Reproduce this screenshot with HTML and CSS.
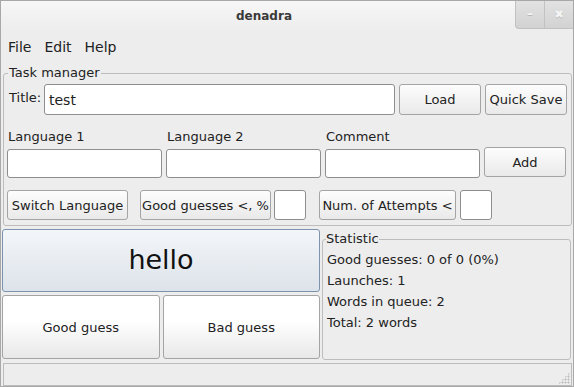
FILE: index.html
```html
<!DOCTYPE html>
<html lang="en">
<head>
    <meta charset="UTF-8">
    <title>denadra</title>
    <link rel="stylesheet" href="styles.css">
</head>
<body>
    <div class="window">
        <div class="titlebar">
            <span class="title">denadra</span>
            <div class="wm-buttons">
                <span class="wm-btn wm-min">&#8211;</span>
                <span class="wm-btn wm-close">&#10006;</span>
            </div>
        </div>

        <div class="menubar">
            <span>File</span>
            <span>Edit</span>
            <span>Help</span>
        </div>

        <fieldset class="frame task">
            <legend>Task manager</legend>
            <div class="title-row">
                <span class="lbl">Title:</span>
                <input class="entry title-entry" type="text" value="test">
                <button class="btn">Load</button>
                <button class="btn">Quick Save</button>
            </div>
            <div class="word-grid">
                <span class="lbl">Language 1</span>
                <span class="lbl">Language 2</span>
                <span class="lbl">Comment</span>
                <span></span>
                <input class="entry" type="text">
                <input class="entry" type="text">
                <input class="entry" type="text">
                <button class="btn">Add</button>
            </div>
            <div class="filter-row">
                <button class="btn switch">Switch Language</button>
                <button class="btn good-btn">Good guesses &lt;, %</button>
                <input class="entry small" type="text">
                <button class="btn attempts">Num. of Attempts &lt;</button>
                <input class="entry small" type="text">
            </div>
        </fieldset>

        <div class="quiz">
            <div class="cards">
                <button class="btn word">hello</button>
                <div class="answers">
                    <button class="btn answer">Good guess</button>
                    <button class="btn answer">Bad guess</button>
                </div>
            </div>
            <fieldset class="frame stats">
                <legend>Statistic</legend>
                <p>Good guesses: 0 of 0 (0%)</p>
                <p>Launches: 1</p>
                <p>Words in queue: 2</p>
                <p>Total: 2 words</p>
            </fieldset>
        </div>

        <div class="statusbar">
            <span class="grip"></span>
        </div>
    </div>
</body>
</html>
```

FILE: styles.css
```css
* {
    box-sizing: border-box;
}
body {
    margin: 0;
    font-family: "DejaVu Sans", sans-serif;
    font-size: 13px;
    color: #2e2e2e;
    background: #ededed;
}
.window {
    width: 574px;
    height: 387px;
    border: 1px solid #a8a8a8;
    background: #ededed;
    display: flex;
    flex-direction: column;
    overflow: hidden;
}
.titlebar {
    height: 29px;
    position: relative;
    display: flex;
    align-items: center;
    justify-content: center;
    background: linear-gradient(#f7f7f7, #ededed);
}
.title {
    font-weight: bold;
    font-size: 12px;
    color: #3a3a3a;
    margin-left: -46px;
}
.wm-buttons {
    position: absolute;
    top: -1px;
    right: 0;
    display: flex;
}
.wm-btn {
    width: 29px;
    height: 29px;
    display: flex;
    align-items: center;
    justify-content: center;
    color: #f4f4f4;
    font-size: 12px;
    background: linear-gradient(#e2e2e2, #d2d2d2);
    border-left: 1px solid #c2c2c2;
    border-bottom: 1px solid #c2c2c2;
    text-shadow: 0 1px 0 #b8b8b8;
}
.wm-min {
    border-bottom-left-radius: 4px;
    font-weight: bold;
}
.wm-close {
    width: 29px;
    font-size: 11px;
}
.menubar {
    height: 32px;
    display: flex;
    align-items: center;
    gap: 13px;
    padding: 2px 0 0 7px;
    font-size: 14px;
    color: #222;
}
.frame {
    border: 1px solid #bdbdbd;
    border-radius: 3px;
    margin: 0;
    min-width: 0;
}
.frame legend {
    padding: 0 1px;
    margin-left: 0;
    color: #222;
    font-size: 13px;
    line-height: 14px;
}
.task {
    margin: 4px 1px 0 2px;
    padding: 2px 3px 3px 4px;
    height: 160px;
}
.lbl {
    color: #222;
}
.entry {
    font: inherit;
    font-size: 14px;
    color: #222;
    background: #fff;
    border: 1px solid #8e8e8e;
    border-radius: 3px;
    padding: 2px 4px;
    height: 30px;
    min-width: 0;
    outline: none;
}
.btn {
    font: inherit;
    font-size: 13px;
    color: #222;
    border: 1px solid #a4a4a4;
    border-radius: 3px;
    background: linear-gradient(#fdfdfd, #e9e9e9);
    padding: 0;
    height: 31px;
    white-space: nowrap;
}
.title-row {
    display: flex;
    align-items: center;
    gap: 4px;
    margin-top: 2px;
}
.title-row .lbl {
    width: 32px;
    padding-left: 1px;
    margin-top: -5px;
}
.title-row .title-entry {
    width: 351px;
    height: 31px;
}
.title-row .btn {
    width: 82px;
}
.word-grid {
    display: grid;
    grid-template-columns: 155px 155px 155px 82px;
    column-gap: 4px;
    row-gap: 0;
    margin-top: 14px;
    margin-left: -1px;
}
.word-grid .lbl {
    padding-left: 1px;
    height: 18px;
}
.word-grid .entry {
    height: 29px;
    margin-top: 2px;
}
.word-grid .btn {
    height: 30px;
}
.filter-row {
    display: flex;
    align-items: center;
    margin-top: 12px;
    margin-left: -1px;
}
.filter-row .btn {
    height: 30px;
}
.switch {
    width: 121px;
}
.good-btn {
    width: 131px;
    margin-left: 12px;
}
.small {
    width: 32px;
    height: 30px;
    margin-left: 3px;
}
.attempts {
    width: 137px;
    margin-left: 13px;
}
.attempts + .small {
    margin-left: 4px;
}
.quiz {
    display: flex;
    gap: 2px;
    margin: 3px 2px 0 1px;
    height: 131px;
}
.cards {
    width: 318px;
    display: flex;
    flex-direction: column;
    gap: 3px;
}
.btn.word {
    height: 63px;
    font-size: 27px;
    color: #111;
    border-color: #7d93ad;
    background: linear-gradient(#f3f6f9, #dde3ea);
    padding-bottom: 2px;
}
.answers {
    display: flex;
    gap: 3px;
}
.btn.answer {
    height: 64px;
    flex: 1;
    background: linear-gradient(#ffffff 40%, #e8e8e8);
}
.stats {
    flex: 1;
    margin-top: 3px;
    padding: 0 4px 0 4px;
}
.stats legend {
    margin-left: -1px;
    padding: 0;
}
.stats p {
    margin: 0;
    height: 21px;
    line-height: 21px;
    font-size: 13px;
    color: #222;
}
.stats p:first-of-type {
    margin-top: 3px;
}
.statusbar {
    margin: 3px 1px 0 2px;
    height: 23px;
    border: 1px solid #bcbcbc;
    position: relative;
}
.grip {
    position: absolute;
    right: 1px;
    bottom: 1px;
    width: 12px;
    height: 12px;
    background:
        radial-gradient(circle, #bdbdbd 45%, transparent 50%) 0 0 / 3px 3px;
    clip-path: polygon(100% 0, 100% 100%, 0 100%);
}
```
